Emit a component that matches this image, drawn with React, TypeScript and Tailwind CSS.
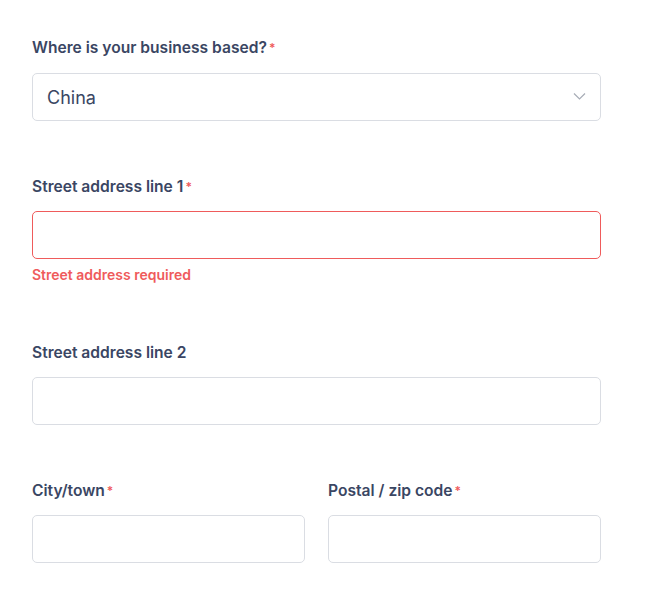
import { useState } from "react";

const Label = ({ text, required }: { text: string; required?: boolean }) => (
  <label className="block h-[20px] text-[15.6px] leading-[20px] font-semibold text-[#3a4663]">
    {text}
    {required && <span className="ml-[2px] text-[12px] align-top text-[#ef5b5b]">*</span>}
  </label>
);

const TextInput = ({ error }: { error?: boolean }) => (
  <input
    type="text"
    className={`mt-[14px] block h-[48px] w-full rounded-[5px] border bg-white px-[14px] text-[17px] text-[#3a4663] outline-none ${
      error ? "border-[#ef5b5b]" : "border-[#dadde3]"
    }`}
  />
);

export default function App() {
  const [country, setCountry] = useState("China");

  return (
    <div className="min-h-[598px] bg-white pl-[32px] pt-[38px] font-['Inter',sans-serif]">
      <div className="w-[569px]">
        <div>
          <Label text="Where is your business based?" required />
          <div className="relative mt-[15px]">
            <select
              value={country}
              onChange={(e) => setCountry(e.target.value)}
              className="block h-[48px] w-full appearance-none rounded-[5px] border border-[#dadde3] bg-white pl-[14px] text-[18px] text-[#3a4663] outline-none"
            >
              <option>China</option>
              <option>United States</option>
              <option>United Kingdom</option>
            </select>
            <svg
              className="pointer-events-none absolute right-[15px] top-[19px]"
              width="13"
              height="9"
              viewBox="0 0 13 9"
              fill="none"
            >
              <path d="M1 1.5l5.5 5.5 5.5-5.5" stroke="#a7acb6" strokeWidth="1.2" />
            </svg>
          </div>
        </div>

        <div className="mt-[56px]">
          <Label text="Street address line 1" required />
          <TextInput error />
          <p className="mt-[8px] text-[14px] leading-[16px] font-semibold text-[#ef5b5b]">
            Street address required
          </p>
        </div>

        <div className="mt-[60px]">
          <Label text="Street address line 2" />
          <TextInput />
        </div>

        <div className="mt-[56px] grid grid-cols-2 gap-[23px]">
          <div>
            <Label text="City/town" required />
            <TextInput />
          </div>
          <div>
            <Label text="Postal / zip code" required />
            <TextInput />
          </div>
        </div>
      </div>
    </div>
  );
}
